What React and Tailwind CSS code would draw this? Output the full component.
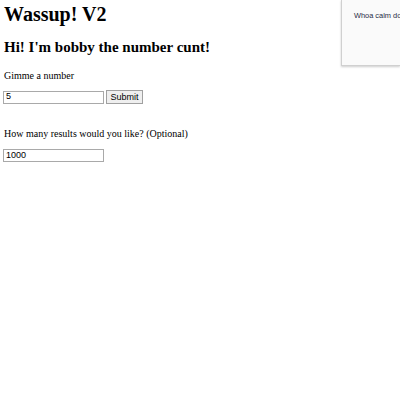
export default function App() {
  return (
    <div className="relative w-[400px] h-[400px] bg-white overflow-hidden font-['Liberation_Serif',serif] text-black">
      <div className="pl-[4px]">
        <h1 className="pt-[2px] text-[20px] leading-[24px] font-bold">Wassup! V2</h1>
        <h2 className="mt-[12px] text-[15px] leading-[18px] font-bold">Hi! I'm bobby the number cunt!</h2>
        <p className="mt-[13px] text-[10px] leading-[13px]">Gimme a number</p>
        <form className="mt-[8px] flex items-center gap-[2px] -ml-[1px]">
          <input
            type="text"
            defaultValue="5"
            className="w-[101px] h-[13px] border border-[#a9a9a9] px-[2px] text-[9px] font-['Liberation_Sans',sans-serif] outline-none"
          />
          <button
            type="button"
            className="w-[37px] h-[14px] border border-[#a0a0a0] bg-[#efefef] text-[9px] leading-none font-['Liberation_Sans',sans-serif]"
          >
            Submit
          </button>
        </form>
        <p className="mt-[23px] text-[10px] leading-[13px]">How many results would you like? (Optional)</p>
        <input
          type="text"
          defaultValue="1000"
          className="mt-[9px] -ml-[1px] block w-[101px] h-[13px] border border-[#a9a9a9] px-[2px] text-[9px] font-['Liberation_Sans',sans-serif] outline-none"
        />
      </div>

      <div className="absolute right-0 top-0 w-[59px] h-[66px] bg-[#fafafa] border-l border-b border-[#d0d0d0] shadow-[0_1px_2px_rgba(0,0,0,0.2)]">
        <p className="mt-[11px] ml-[12px] whitespace-nowrap text-[7.4px] leading-[10px] text-[#1e2a44] font-['Liberation_Sans',sans-serif]">
          Whoa calm do
        </p>
      </div>
    </div>
  );
}
